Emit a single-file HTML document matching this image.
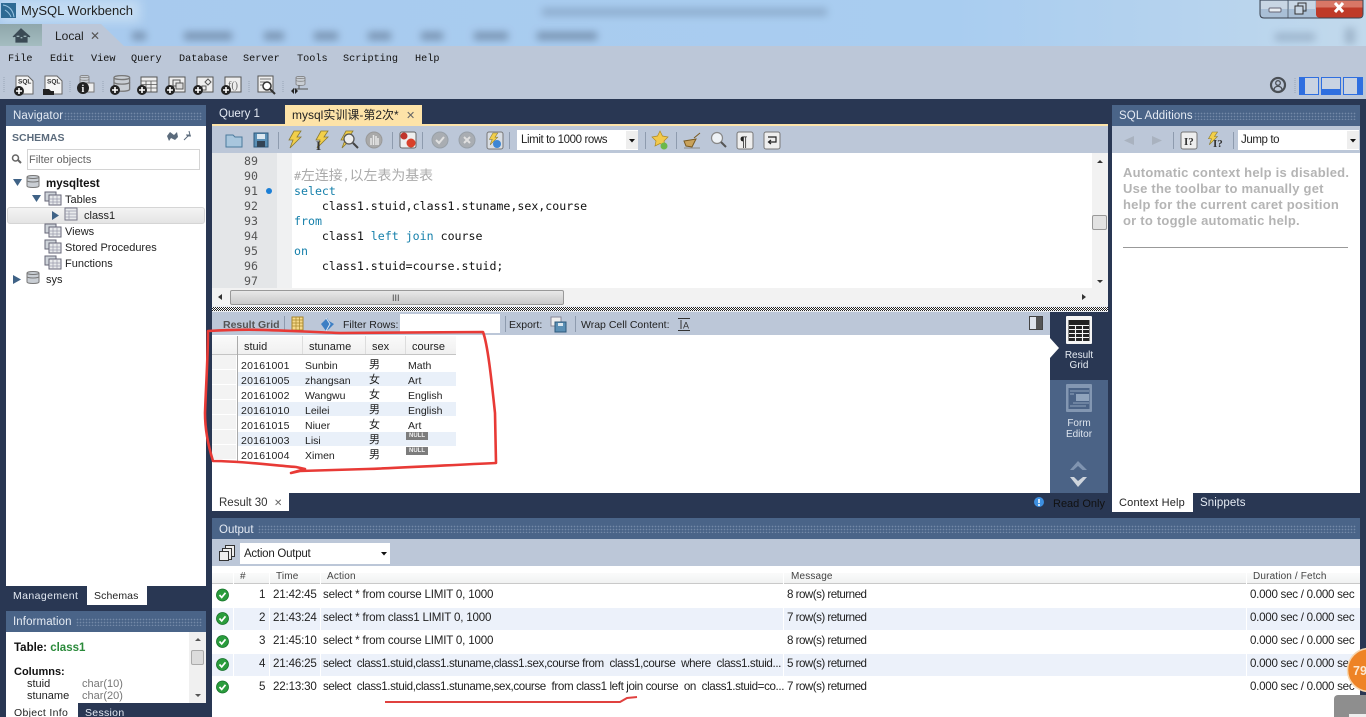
<!DOCTYPE html>
<html><head><meta charset="utf-8"><title>MySQL Workbench</title>
<style>
html,body{margin:0;padding:0;width:1366px;height:717px;overflow:hidden;background:#293753}
body{position:relative;font-family:"Liberation Sans","Noto Sans CJK SC",sans-serif;font-size:11.5px;color:#222}
.b,.t{position:absolute}
.t{white-space:pre;line-height:14px}
.m{font-family:"Liberation Mono",monospace;font-size:10.2px;color:#111}
.c{font-family:"DejaVu Sans Mono","Noto Sans CJK SC",monospace;font-size:11.6px;color:#111;line-height:15px}
.k{color:#1680ab}.n{color:#555;text-align:right;width:30px;left:228px}
.h{color:#e4eaf3;font-size:11.5px;letter-spacing:.1px}
.hd{background:#4a6488}
.dots{background-image:radial-gradient(circle,#7489a8 .7px,transparent .9px);background-size:3px 3px}
.g{font-size:10.5px;color:#222}
.id{letter-spacing:.25px}
.x{font-size:11px;left:369px}
.o{font-size:11.6px;letter-spacing:-.18px;color:#222}
.a{letter-spacing:-.38px}.ms{letter-spacing:-.52px}.d{letter-spacing:-.28px}
.ohd{font-size:10px;color:#444;letter-spacing:.15px}
.tr{font-size:11px;color:#222}
.blur{position:absolute;background:#51657f;filter:blur(4px);opacity:.55;height:8px}
.null{position:absolute;left:406px;width:22px;height:8px;background:#7c7c7c;color:#eee;font:bold 6px/8px "Liberation Sans",sans-serif;text-align:center}
svg{position:absolute;left:0;top:0}
</style></head><body>

<!-- title bar -->
<div class="b" style="left:0;top:0;width:1366px;height:46px;background:linear-gradient(90deg,#a8caee,#a9cdf0 70%,#b4d2ee 85%,#c2d9ec)"></div>
<div class="b" style="left:0;top:0;width:140px;height:22px;background:#c4dcf3;filter:blur(5px)"></div>
<div class="blur" style="left:542px;top:8px;width:285px;height:8px;opacity:.3"></div>
<div class="blur" style="left:1275px;top:33px;width:40px;opacity:.3"></div>
<div class="blur" style="left:1345px;top:28px;width:10px;height:16px;opacity:.3"></div>
<div class="blur" style="left:132px;top:32px;width:14px"></div>
<div class="blur" style="left:184px;top:32px;width:48px"></div>
<div class="blur" style="left:264px;top:32px;width:20px"></div>
<div class="blur" style="left:314px;top:32px;width:24px"></div>
<div class="blur" style="left:368px;top:32px;width:23px"></div>
<div class="blur" style="left:421px;top:32px;width:22px"></div>
<div class="blur" style="left:474px;top:32px;width:34px"></div>
<div class="blur" style="left:537px;top:32px;width:60px"></div>
<div class="t" style="left:21px;top:3px;font-size:13px;color:#222;line-height:15px">MySQL Workbench</div>

<!-- tabs home/local -->
<div class="b" style="left:0;top:24px;width:42px;height:22px;background:linear-gradient(#8fa6ab,#a4bcc0)"></div>
<div class="b" style="left:42px;top:24px;width:82px;height:22px;background:#bcc7d8;clip-path:polygon(0 0,72% 0,100% 100%,0 100%)"></div>
<div class="t" style="left:55px;top:29px;font-size:12px;color:#222">Local</div>
<div class="t" style="left:90px;top:29px;font-size:12px;color:#555">✕</div>

<!-- menu & toolbar -->
<div class="b" style="left:0;top:46px;width:1366px;height:53px;background:#bcc7d8"></div>
<div class="t m" style="left:8px;top:53px">File</div>
<div class="t m" style="left:50px;top:53px">Edit</div>
<div class="t m" style="left:91px;top:53px">View</div>
<div class="t m" style="left:131px;top:53px">Query</div>
<div class="t m" style="left:179px;top:53px">Database</div>
<div class="t m" style="left:243px;top:53px">Server</div>
<div class="t m" style="left:297px;top:53px">Tools</div>
<div class="t m" style="left:343px;top:53px">Scripting</div>
<div class="t m" style="left:415px;top:53px">Help</div>

<!-- left navigator -->
<div class="b hd" style="left:6px;top:105px;width:200px;height:21px"></div>
<div class="b dots" style="left:64px;top:112px;width:138px;height:8px"></div>
<div class="t h" style="left:13px;top:109px">Navigator</div>
<div class="b" style="left:6px;top:126px;width:200px;height:460px;background:#fff"></div>
<div class="t" style="left:12px;top:131px;font-size:10.5px;font-weight:bold;color:#5b6b7c">SCHEMAS</div>
<div class="b" style="left:27px;top:149px;width:171px;height:19px;border:1px solid #d4d4d4;background:#fff"></div>
<div class="t" style="left:29px;top:153px;font-size:11px;color:#666">Filter objects</div>
<div class="b" style="left:7px;top:207px;width:196px;height:15px;background:linear-gradient(#f4f4f4,#e4e4e4);border:1px solid #d5d5d5;border-radius:3px"></div>
<div class="t tr" style="left:46px;top:177px;font-weight:bold;font-size:11.5px;color:#111">mysqltest</div>
<div class="t tr" style="left:65px;top:193px">Tables</div>
<div class="t tr" style="left:84px;top:209px">class1</div>
<div class="t tr" style="left:65px;top:225px">Views</div>
<div class="t tr" style="left:65px;top:241px">Stored Procedures</div>
<div class="t tr" style="left:65px;top:257px">Functions</div>
<div class="t tr" style="left:46px;top:273px">sys</div>

<div class="t h" style="left:13px;top:589px;font-size:10.5px;letter-spacing:.4px">Management</div>
<div class="b" style="left:87px;top:586px;width:60px;height:19px;background:#fff"></div>
<div class="t" style="left:94px;top:589px;font-size:10.5px;letter-spacing:.1px">Schemas</div>

<div class="b hd" style="left:6px;top:611px;width:200px;height:21px"></div>
<div class="b dots" style="left:76px;top:618px;width:126px;height:8px"></div>
<div class="t h" style="left:13px;top:615px">Information</div>
<div class="b" style="left:6px;top:632px;width:200px;height:71px;background:#fff"></div>
<div class="b" style="left:189px;top:632px;width:17px;height:71px;background:#f0f0f0"></div>
<div class="b" style="left:191px;top:650px;width:13px;height:15px;background:#dcdcdc;border:1px solid #aaa;border-radius:2px;box-sizing:border-box"></div>
<div class="t" style="left:14px;top:641px;font-size:11.5px;font-weight:bold;color:#111">Table: <span style="color:#2a8a3a">class1</span></div>
<div class="t" style="left:14px;top:665px;font-size:11px;font-weight:bold;color:#111">Columns:</div>
<div class="t g" style="left:27px;top:677px;font-size:11px">stuid</div><div class="t g" style="left:82px;top:677px;color:#777;font-size:11px">char(10)</div>
<div class="t g" style="left:27px;top:689px;font-size:11px">stuname</div><div class="t g" style="left:82px;top:689px;color:#777;font-size:11px">char(20)</div>
<div class="b" style="left:6px;top:703px;width:72px;height:14px;background:#fff"></div>
<div class="t" style="left:14px;top:706px;font-size:10.5px;letter-spacing:.3px">Object Info</div>
<div class="t h" style="left:85px;top:706px;font-size:10.5px;letter-spacing:.3px">Session</div>

<!-- query tabs -->
<div class="t h" style="left:219px;top:107px;font-size:11.5px;letter-spacing:0">Query 1</div>
<div class="b" style="left:285px;top:105px;width:137px;height:19px;background:#fde3a8"></div>
<div class="t" style="left:292px;top:108px;font-size:12px;color:#222">mysql实训课-第2次*</div>
<div class="t" style="left:406px;top:109px;font-size:11px;color:#666">✕</div>
<div class="b" style="left:212px;top:124px;width:896px;height:2px;background:#fde3a8"></div>
<div class="b" style="left:212px;top:126px;width:896px;height:27px;background:#bcc7d8"></div>
<div class="b" style="left:517px;top:130px;width:121px;height:20px;background:#fff"></div>
<div class="b" style="left:626px;top:131px;width:12px;height:18px;background:#eee"></div>
<div class="t" style="left:521px;top:133px;font-size:11.5px;color:#222;letter-spacing:-.4px">Limit to 1000 rows</div>

<!-- editor -->
<div class="b" style="left:212px;top:153px;width:896px;height:135px;background:#fff"></div>
<div class="b" style="left:212px;top:153px;width:65px;height:135px;background:#e4e6e8"></div>
<div class="b" style="left:277px;top:153px;width:15px;height:135px;background:#f0f1f2"></div>
<div class="b" style="left:1092px;top:153px;width:16px;height:135px;background:#f2f2f2"></div>
<div class="b" style="left:1092px;top:215px;width:15px;height:15px;background:#e2e2e2;border:1px solid #999;border-radius:2px;box-sizing:border-box"></div>
<div class="t c n" style="top:154px">89</div>
<div class="t c n" style="top:169px">90</div>
<div class="t c n" style="top:184px">91</div>
<div class="t c n" style="top:199px">92</div>
<div class="t c n" style="top:214px">93</div>
<div class="t c n" style="top:229px">94</div>
<div class="t c n" style="top:244px">95</div>
<div class="t c n" style="top:259px">96</div>
<div class="t c n" style="top:274px">97</div>
<div class="b" style="left:266px;top:188px;width:6px;height:6px;border-radius:50%;background:#1b7fd6"></div>
<div class="t c" style="left:294px;top:169px;color:#aaa">#<span style="font-size:13.9px;line-height:15px">左连接</span>,<span style="font-size:13.9px;line-height:15px">以左表为基表</span></div>
<div class="t c k" style="left:294px;top:184px">select</div>
<div class="t c" style="left:294px;top:199px">    class1.stuid,class1.stuname,sex,course</div>
<div class="t c k" style="left:294px;top:214px">from</div>
<div class="t c" style="left:294px;top:229px">    class1 <span class="k">left</span> <span class="k">join</span> course</div>
<div class="t c k" style="left:294px;top:244px">on</div>
<div class="t c" style="left:294px;top:259px">    class1.stuid=course.stuid;</div>

<!-- hscroll -->
<div class="b" style="left:212px;top:288px;width:896px;height:18px;background:#f2f2f2"></div>
<div class="b" style="left:230px;top:290px;width:334px;height:15px;background:linear-gradient(#e8e8e8,#c9c9c9);border:1px solid #999;border-radius:2px;box-sizing:border-box"></div>
<div class="t" style="left:392px;top:291px;font-size:9px;color:#444">III</div>
<div class="b" style="left:212px;top:306px;width:896px;height:6px;background:#e8ebf0"></div>
<div class="b" style="left:212px;top:307px;width:896px;height:4px;background:conic-gradient(#222 25%,#fff 0 50%,#222 0 75%,#fff 0);background-size:2px 2px"></div>

<!-- result toolbar -->
<div class="b" style="left:212px;top:312px;width:838px;height:23px;background:#bcc7d8"></div>
<div class="t" style="left:223px;top:318px;font-size:10.5px;font-weight:bold;color:#555">Result Grid</div>
<div class="t" style="left:343px;top:318px;font-size:10.5px;color:#222">Filter Rows:</div>
<div class="b" style="left:400px;top:314px;width:100px;height:19px;background:#fff"></div>
<div class="t" style="left:509px;top:318px;font-size:10.5px;color:#222">Export:</div>
<div class="t" style="left:581px;top:318px;font-size:10.5px;color:#222">Wrap Cell Content:</div>

<!-- result grid -->
<div class="b" style="left:212px;top:335px;width:838px;height:158px;background:#fff"></div>
<div class="b" style="left:212px;top:336px;width:244px;height:19px;background:linear-gradient(#fafafa,#f0f0f0);border-bottom:1px solid #c4c4c4;box-sizing:border-box"></div>
<div class="b" style="left:212px;top:355px;width:24px;height:106px;background:repeating-linear-gradient(#f3f3f3 0 14px,#fff 14px 15px)"></div>
<div class="b" style="left:237px;top:336px;width:1px;height:126px;background:#aaa"></div>
<div class="b" style="left:302px;top:336px;width:1px;height:18px;background:#ddd"></div>
<div class="b" style="left:365px;top:336px;width:1px;height:18px;background:#ddd"></div>
<div class="b" style="left:405px;top:336px;width:1px;height:18px;background:#ddd"></div>
<div class="b" style="left:238px;top:372px;width:218px;height:14px;background:#e9f0f9"></div>
<div class="b" style="left:238px;top:402px;width:218px;height:14px;background:#e9f0f9"></div>
<div class="b" style="left:238px;top:432px;width:218px;height:14px;background:#e9f0f9"></div>
<div class="t g" style="left:244px;top:340px;font-size:11px">stuid</div>
<div class="t g" style="left:309px;top:340px;font-size:11px">stuname</div>
<div class="t g" style="left:372px;top:340px;font-size:11px">sex</div>
<div class="t g" style="left:412px;top:340px;font-size:11px">course</div>

<div class="t g id" style="left:241px;top:359px">20161001</div><div class="t g" style="left:305px;top:359px">Sunbin</div><div class="t g x" style="top:358px">男</div><div class="t g" style="left:408px;top:359px">Math</div>
<div class="t g id" style="left:241px;top:374px">20161005</div><div class="t g" style="left:305px;top:374px">zhangsan</div><div class="t g x" style="top:373px">女</div><div class="t g" style="left:408px;top:374px">Art</div>
<div class="t g id" style="left:241px;top:389px">20161002</div><div class="t g" style="left:305px;top:389px">Wangwu</div><div class="t g x" style="top:388px">女</div><div class="t g" style="left:408px;top:389px">English</div>
<div class="t g id" style="left:241px;top:404px">20161010</div><div class="t g" style="left:305px;top:404px">Leilei</div><div class="t g x" style="top:403px">男</div><div class="t g" style="left:408px;top:404px">English</div>
<div class="t g id" style="left:241px;top:419px">20161015</div><div class="t g" style="left:305px;top:419px">Niuer</div><div class="t g x" style="top:418px">女</div><div class="t g" style="left:408px;top:419px">Art</div>
<div class="t g id" style="left:241px;top:434px">20161003</div><div class="t g" style="left:305px;top:434px">Lisi</div><div class="t g x" style="top:433px">男</div><div class="null" style="top:432px">NULL</div>
<div class="t g id" style="left:241px;top:449px">20161004</div><div class="t g" style="left:305px;top:449px">Ximen</div><div class="t g x" style="top:448px">男</div><div class="null" style="top:447px">NULL</div>

<!-- side rail -->
<div class="b" style="left:1050px;top:380px;width:58px;height:113px;background:#4b6386"></div>
<div class="t" style="left:1050px;top:351px;width:58px;text-align:center;font-size:10px;line-height:10px;color:#e8edf4;white-space:normal">Result<br>Grid</div>
<div class="t" style="left:1050px;top:418px;width:58px;text-align:center;font-size:10px;line-height:11px;color:#dfe6ef;white-space:normal">Form<br>Editor</div>
<div class="b" style="left:1050px;top:338px;width:9px;height:20px;background:#fff;clip-path:polygon(0 0,100% 50%,0 100%)"></div>

<!-- result tab row -->
<div class="b" style="left:212px;top:493px;width:77px;height:18px;background:#fff"></div>
<div class="t" style="left:219px;top:496px;font-size:11.5px;color:#333">Result 30</div>
<div class="t" style="left:274px;top:497px;font-size:10px;color:#666">✕</div>
<div class="t" style="left:1053px;top:497px;font-size:11px;color:#111">Read Only</div>

<!-- SQL additions -->
<div class="b hd" style="left:1112px;top:105px;width:248px;height:21px"></div>
<div class="b dots" style="left:1194px;top:112px;width:162px;height:8px"></div>
<div class="t h" style="left:1119px;top:109px">SQL Additions</div>
<div class="b" style="left:1112px;top:126px;width:248px;height:27px;background:#bcc7d8"></div>
<div class="b" style="left:1238px;top:130px;width:121px;height:20px;background:#fff"></div>
<div class="b" style="left:1347px;top:131px;width:12px;height:18px;background:#eee"></div>
<div class="t" style="left:1241px;top:133px;font-size:11.5px;color:#222;letter-spacing:-.4px">Jump to</div>
<div class="b" style="left:1112px;top:153px;width:248px;height:340px;background:#fff"></div>
<div class="t" style="left:1123px;top:165px;font-size:13px;font-weight:bold;color:#b4b4b4;line-height:16px;letter-spacing:.23px">Automatic context help is disabled.
Use the toolbar to manually get
help for the current caret position
or to toggle automatic help.</div>
<div class="b" style="left:1123px;top:247px;width:225px;height:1px;background:#999"></div>
<div class="b" style="left:1112px;top:493px;width:81px;height:19px;background:#fff"></div>
<div class="t" style="left:1119px;top:496px;font-size:11px;color:#222;letter-spacing:.2px">Context Help</div>
<div class="t h" style="left:1200px;top:496px;letter-spacing:.1px">Snippets</div>

<!-- output -->
<div class="b hd" style="left:212px;top:518px;width:1148px;height:21px"></div>
<div class="b dots" style="left:258px;top:525px;width:1098px;height:8px"></div>
<div class="t h" style="left:219px;top:523px;letter-spacing:0">Output</div>
<div class="b" style="left:212px;top:539px;width:1148px;height:27px;background:#bcc7d8"></div>
<div class="b" style="left:240px;top:543px;width:150px;height:21px;background:#fff"></div>
<div class="t" style="left:244px;top:547px;font-size:11.5px;color:#222;letter-spacing:-.25px">Action Output</div>
<div class="b" style="left:212px;top:566px;width:1148px;height:151px;background:#fff"></div>
<div class="b" style="left:212px;top:573px;width:1148px;height:10px;background:linear-gradient(#fbfbfb,#f1f2f2);border-bottom:1px solid #c9c9c9"></div>
<div class="b" style="left:212px;top:608px;width:1148px;height:22px;background:#ecf1fa"></div>
<div class="b" style="left:212px;top:654px;width:1148px;height:22px;background:#ecf1fa"></div>
<div class="b" style="left:233px;top:566px;width:1px;height:120px;background:#fff"></div>
<div class="b" style="left:269px;top:566px;width:1px;height:110px;background:#fff"></div>
<div class="b" style="left:320px;top:566px;width:1px;height:110px;background:#fff"></div>
<div class="b" style="left:783px;top:566px;width:1px;height:110px;background:#fff"></div>
<div class="b" style="left:1246px;top:566px;width:1px;height:110px;background:#fff"></div>
<div class="t ohd" style="left:240px;top:570px">#</div>
<div class="t ohd" style="left:276px;top:570px">Time</div>
<div class="t ohd" style="left:327px;top:570px">Action</div>
<div class="t ohd" style="left:791px;top:570px">Message</div>
<div class="t ohd" style="left:1253px;top:570px">Duration / Fetch</div>

<div class="t o" style="left:259px;top:588px">1</div><div class="t o" style="left:273px;top:588px">21:42:45</div><div class="t o a" style="left:323px;top:588px;letter-spacing:-.2px">select * from course LIMIT 0, 1000</div><div class="t o ms" style="left:787px;top:588px">8 row(s) returned</div><div class="t o d" style="left:1250px;top:588px">0.000 sec / 0.000 sec</div>
<div class="t o" style="left:259px;top:611px">2</div><div class="t o" style="left:273px;top:611px">21:43:24</div><div class="t o a" style="left:323px;top:611px;letter-spacing:-.2px">select * from class1 LIMIT 0, 1000</div><div class="t o ms" style="left:787px;top:611px">7 row(s) returned</div><div class="t o d" style="left:1250px;top:611px">0.000 sec / 0.000 sec</div>
<div class="t o" style="left:259px;top:634px">3</div><div class="t o" style="left:273px;top:634px">21:45:10</div><div class="t o a" style="left:323px;top:634px;letter-spacing:-.2px">select * from course LIMIT 0, 1000</div><div class="t o ms" style="left:787px;top:634px">8 row(s) returned</div><div class="t o d" style="left:1250px;top:634px">0.000 sec / 0.000 sec</div>
<div class="t o" style="left:259px;top:657px">4</div><div class="t o" style="left:273px;top:657px">21:46:25</div><div class="t o a" style="left:323px;top:657px">select  class1.stuid,class1.stuname,class1.sex,course from  class1,course  where  class1.stuid...</div><div class="t o ms" style="left:787px;top:657px">5 row(s) returned</div><div class="t o d" style="left:1250px;top:657px">0.000 sec / 0.000 sec</div>
<div class="t o" style="left:259px;top:680px">5</div><div class="t o" style="left:273px;top:680px">22:13:30</div><div class="t o a" style="left:323px;top:680px">select  class1.stuid,class1.stuname,sex,course  from class1 left join course  on  class1.stuid=co...</div><div class="t o ms" style="left:787px;top:680px">7 row(s) returned</div><div class="t o d" style="left:1250px;top:680px">0.000 sec / 0.000 sec</div>

<!-- icons & annotations -->
<svg width="1366" height="717" viewBox="0 0 1366 717" xmlns="http://www.w3.org/2000/svg">
<defs>
<g id="plus"><circle r="5" fill="#222"/><path d="M-3 0H3M0-3V3" stroke="#fff" stroke-width="1.6"/></g>
<g id="cyl"><path d="M0 2C0 0 12 0 12 2V11C12 13 0 13 0 11Z" fill="#c9ced4" stroke="#777"/><path d="M0 2C0 4 12 4 12 2M0 5.5C0 7.5 12 7.5 12 5.5" fill="none" stroke="#777"/></g>
<g id="grp"><rect x="0" y="0" width="11" height="9" fill="#cfd4da" stroke="#667"/><rect x="4" y="3" width="12" height="10" fill="#e8eaec" stroke="#667"/><path d="M8 3V13M12 3V13M4 7H16M4 10H16" stroke="#99a" stroke-width=".7"/></g>
<g id="ok"><circle r="6" fill="#2a9c3c"/><circle r="6" fill="none" stroke="#15702a" stroke-width=".8"/><path d="M-3 0L-.8 2.4 3 -2.2" fill="none" stroke="#fff" stroke-width="1.7"/></g>
<path id="bolt" d="M7 0L14 0 10 6 14 6 3 17 6 9 2 9Z" fill="#f2cf4a" stroke="#8a7a30" stroke-width=".8"/>
</defs>

<!-- app icon -->
<rect x="1" y="3" width="15" height="15" fill="#2e6a94"/><path d="M3 5C9 6 13 10 14 17M5 10C8 12 10 14 11 17" stroke="#9cc6e4" fill="none"/>
<!-- home -->
<path d="M13 37L21 29 30 37M16 35V42H27V35H23V39H20V35Z" fill="#3b4a55" stroke="#3b4a55" stroke-width="1.2"/>

<!-- window buttons -->
<g>
<path d="M1260 0V14Q1260 18 1264 18H1359Q1363 18 1363 14V0Z" fill="#a9bfd6" stroke="#39424f"/>
<rect x="1261" y="1" width="27" height="8" fill="#c8d6e4"/><rect x="1289" y="1" width="26" height="8" fill="#c8d6e4"/>
<path d="M1288 0V18" stroke="#39424f" stroke-width=".7"/>
<rect x="1316" y="0.500" width="46.500" height="17" rx="3" fill="#bf3a28"/><rect x="1316" y="0.500" width="46.500" height="7" fill="#d97766"/>
<rect x="1269" y="8" width="12" height="4" rx="1" fill="#e8edf2" stroke="#667"/>
<rect x="1295" y="6" width="8" height="8" fill="#c8d6e4" stroke="#333"/><path d="M1298 6V3H1306V11H1303" fill="none" stroke="#333"/>
<path d="M1335 3L1343 12M1343 3L1335 12" stroke="#fff" stroke-width="3"/>
</g>

<!-- main toolbar -->
<g>
<path d="M4 77V93M70 81V92M103 81V92M249 81V92M283 81V92" stroke="#98a4b6" stroke-dasharray="1 1"/>
<g transform="translate(16,76)"><path d="M0 0H12L17 5V18H0Z" fill="#f5f5f5" stroke="#666"/><text x="2" y="7.500" font-size="6.500" font-weight="bold" font-family="Liberation Sans" fill="#333">SQL</text><use href="#plus" x="3" y="15"/></g>
<g transform="translate(45,76)"><path d="M0 0H12L17 5V18H0Z" fill="#f5f5f5" stroke="#666"/><text x="2" y="7.500" font-size="6.500" font-weight="bold" font-family="Liberation Sans" fill="#333">SQL</text><path d="M-2 13H4L6 15H9V19H-2Z" fill="#222"/></g>
<g transform="translate(77,75)"><use href="#cyl" transform="translate(3,0) scale(.75)"/><rect x="8" y="8" width="9" height="9" fill="#eee" stroke="#777"/><circle cx="6" cy="13" r="6" fill="#222"/><text x="4.500" y="17" font-size="10" font-weight="bold" font-family="Liberation Serif" fill="#fff">i</text></g>
<g transform="translate(114,75)"><use href="#cyl" transform="scale(1.3)"/><use href="#plus" x="1" y="15"/></g>
<g transform="translate(141,77)"><rect width="16" height="15" fill="#eee" stroke="#555"/><path d="M0 4H16M0 7.500H16M0 11H16M5 4V15M10 4V15" stroke="#555" stroke-width=".8"/><use href="#plus" x="1" y="13"/></g>
<g transform="translate(169,77)"><rect width="16" height="15" fill="#eee" stroke="#555"/><rect x="4" y="3" width="7" height="6" fill="none" stroke="#555"/><rect x="7" y="6" width="7" height="6" fill="#ddd" stroke="#555"/><use href="#plus" x="1" y="13"/></g>
<g transform="translate(197,77)"><rect width="16" height="15" fill="#eee" stroke="#555"/><path d="M11 2L14 5 11 8 8 5Z" fill="none" stroke="#555"/><rect x="5" y="9" width="4" height="4" fill="none" stroke="#555"/><use href="#plus" x="1" y="13"/></g>
<g transform="translate(225,77)"><rect width="16" height="15" fill="#eee" stroke="#555"/><text x="3" y="11.500" font-size="10" font-family="Liberation Serif" fill="#666">f()</text><use href="#plus" x="1" y="13"/></g>
<g transform="translate(258,76)"><rect width="15" height="16" fill="#eee" stroke="#555"/><path d="M2 3H13M2 6H7M2 9H5" stroke="#777"/><circle cx="9" cy="10" r="4" fill="#fff" stroke="#333" stroke-width="1.5"/><path d="M12 13L17 18" stroke="#333" stroke-width="2"/></g>
<g transform="translate(291,76)"><use href="#cyl" transform="translate(5,0) scale(.75)"/><path d="M2 13H17M8 9V13" stroke="#555"/><path d="M0 15L3 12 3 18ZM7 15L4 12 4 18Z" fill="#222"/></g>
</g>
<!-- gear / layout -->
<circle cx="1278" cy="85" r="7" fill="none" stroke="#4a4f55" stroke-width="2.200"/><circle cx="1278" cy="83" r="2.300" fill="none" stroke="#4a4f55" stroke-width="1.300"/><path d="M1274 90C1274 85 1282 85 1282 90" fill="none" stroke="#4a4f55" stroke-width="1.300"/>
<path d="M1295 78V94" stroke="#98a4b6" stroke-dasharray="1 1"/>
<g fill="#c9d3e2" stroke="#2f6fe0" stroke-width="1">
<rect x="1299.500" y="77.500" width="19" height="17"/><rect x="1321.500" y="77.500" width="19" height="17"/><rect x="1343.500" y="77.500" width="19" height="17"/></g>
<rect x="1299" y="77" width="6" height="18" fill="#2f6fe0"/><rect x="1321" y="89" width="20" height="6" fill="#2f6fe0"/><rect x="1357" y="77" width="6" height="18" fill="#2f6fe0"/>

<!-- schemas icons -->
<path d="M167 136L170 132 174 135 177 132 178 137 175 140 171 138 169 141Z" fill="#5b6b7c"/>
<path d="M184 140L188 136M189 131L190 135 186 135M191 136H187" stroke="#5b6b7c" fill="none"/>
<circle cx="15.500" cy="158" r="3" fill="none" stroke="#666" stroke-width="1.500"/><path d="M18 160L21 163" stroke="#666" stroke-width="2"/>
<!-- tree -->
<path d="M13 179H22L17.500 186Z" fill="#3f6286"/><path d="M32 195H41L36.500 202Z" fill="#3f6286"/><path d="M52 211V220L59 215.500Z" fill="#3f6286"/><path d="M13 275V284L21 279.500Z" fill="#3f6286"/>
<use href="#cyl" x="27" y="175"/><use href="#cyl" x="27" y="271"/>
<use href="#grp" x="45" y="192"/><use href="#grp" x="45" y="224"/><use href="#grp" x="45" y="240"/><use href="#grp" x="45" y="256"/>
<g transform="translate(65,208)"><rect width="12" height="12" fill="#e8eaec" stroke="#778"/><path d="M0 3H12M0 6H12M0 9H12M4 3V12" stroke="#99a" stroke-width=".7"/></g>

<!-- query toolbar -->
<path d="M422.500 132V149M509.500 132V149M278.500 132V149M392.500 132V149M645.500 132V149M676.500 132V149" stroke="#8e9bae"/>
<path d="M226 135H233L235 137H242V147H226Z" fill="#a8c6dd" stroke="#4a7a9c"/>
<g transform="translate(254,133)"><rect width="14" height="14" fill="#5a8fb5" stroke="#2e5a7c"/><rect x="3" y="1" width="8" height="5" fill="#dce8f0"/><rect x="3" y="8" width="8" height="6" fill="#345"/></g>
<use href="#bolt" x="287" y="131"/><use href="#bolt" x="314" y="131"/>
<text x="316" y="150" font-size="13" font-weight="bold" font-family="Liberation Serif" fill="#333">I</text>
<use href="#bolt" x="339" y="131"/><circle cx="349" cy="139" r="5" fill="#eee" stroke="#555" stroke-width="1.300"/><path d="M353 143L358 148" stroke="#444" stroke-width="2"/>
<circle cx="374" cy="140" r="8" fill="#a9a9a9" stroke="#999"/><path d="M371 145V138M373.500 145V135M376 145V136M378 145V138" stroke="#e8e8e8" stroke-width="1.500"/>
<rect x="400" y="132" width="16" height="16" rx="2" fill="#eee" stroke="#666"/><circle cx="404" cy="136" r="3.500" fill="#c0342c"/><circle cx="411" cy="143" r="4.500" fill="#d9402a"/>
<circle cx="440" cy="140" r="8" fill="#a9adb2" stroke="#98a0a8"/><path d="M436 140L439 143 444 137" fill="none" stroke="#e0e0e0" stroke-width="2"/>
<circle cx="467" cy="140" r="8" fill="#a9adb2" stroke="#98a0a8"/><path d="M464 137L470 143M470 137L464 143" stroke="#e0e0e0" stroke-width="2"/>
<rect x="487" y="132" width="16" height="17" rx="2" fill="#d8dde3" stroke="#777"/><use href="#bolt" transform="translate(488,133) scale(.7)"/><circle cx="497" cy="144" r="4" fill="#3d86d4"/>
<path d="M629 139H635L632 142.500Z" fill="#111"/>
<path d="M660 131L662.500 136 668 137 664 141 665 146 660 143.500 655 146 656 141 652 137 657.500 136Z" fill="#f2c94c" stroke="#b08a20" stroke-width=".7"/><circle cx="664" cy="146" r="3.500" fill="#6cb84a"/>
<path d="M684 141L696 139 692 147 686 146ZM694 138L700 133" fill="#c9a25a" stroke="#7a5a20"/><path d="M684 148H700" stroke="#888"/>
<circle cx="717" cy="138" r="5.500" fill="#eef2f6" stroke="#888" stroke-width="1.200"/><path d="M721 142L726 147" stroke="#555" stroke-width="2"/>
<rect x="737" y="132" width="16" height="17" rx="2" fill="#eee" stroke="#777"/><text x="740" y="146" font-size="14" font-family="Liberation Sans" fill="#222">¶</text>
<rect x="764" y="132" width="16" height="17" rx="2" fill="#eee" stroke="#777"/><path d="M768 137H776V142H769M771 140L768.500 142 771 144" fill="none" stroke="#222" stroke-width="1.200"/>
<!-- sql additions toolbar -->
<path d="M1134 136V145L1124 140.500ZM1152 136V145L1162 140.500Z" fill="#a9b2bf"/>
<path d="M1173.500 132V149M1233.500 132V149" stroke="#8e9bae"/>
<rect x="1181" y="132" width="16" height="17" rx="2" fill="#eee" stroke="#777"/><text x="1184" y="145" font-size="11" font-weight="bold" font-family="Liberation Serif" fill="#333">I?</text>
<use href="#bolt" transform="translate(1207,132) scale(.75)"/><text x="1213" y="147" font-size="11" font-weight="bold" font-family="Liberation Serif" fill="#333">I?</text>
<path d="M1350 139H1356L1353 142.500Z" fill="#111"/>

<!-- scrollbar arrows -->
<path d="M1097 163L1100 160 1103 163ZM1097 280L1100 283 1103 280ZM222 294V300L218 297ZM1082 294V300L1086 297Z" fill="#333"/>
<path d="M195 641L198 638 201 641ZM195 694L198 697 201 694Z" fill="#555"/>

<!-- result toolbar icons -->
<path d="M284.500 316V332M505.500 316V332M575.500 316V332" stroke="#8e9bae"/>
<g transform="translate(292,317)"><rect width="11" height="13" fill="#f5d98a" stroke="#a8862c"/><path d="M0 3H11M0 6H11M0 9H11M4 0V13M7.500 0V13" stroke="#a8862c" stroke-width=".7"/></g>
<path d="M321 324L327 318 329 321 334 324 329 329 326 331Z" fill="#3d7fc4"/><path d="M326 318L330 324 326 331" fill="none" stroke="#dbe6f2"/>
<g transform="translate(551,317)"><rect width="10" height="9" fill="#eee" stroke="#889"/><rect x="4" y="5" width="11" height="10" fill="#5a8fb5" stroke="#2e5a7c"/><rect x="7" y="6" width="5" height="3" fill="#dce8f0"/></g>
<g transform="translate(678,318)"><path d="M0 .500H12M0 12.500H12" stroke="#333"/><text x="5" y="10.500" font-size="9" font-family="Liberation Sans" fill="#333">A</text><path d="M3 2V11" stroke="#333"/></g>
<rect x="1029.500" y="316.500" width="13" height="13" fill="#dfe4ec" stroke="#444"/><rect x="1036" y="317" width="6" height="12" fill="#555"/>

<!-- rail icons -->
<g transform="translate(1066,316)"><rect width="26" height="28" rx="1" fill="#f5f5f5"/><rect x="2.500" y="4" width="21" height="21" fill="#222"/><path d="M3 9.500H23M3 13.500H23M3 17.500H23M3 21.500H23M9.500 9V25M16.500 9V25" stroke="#f5f5f5" stroke-width="1.100"/></g>
<g transform="translate(1066,384)"><rect width="26" height="28" rx="1" fill="#8397b2"/><rect x="2.500" y="4" width="21" height="21" fill="#4b6386"/><rect x="10" y="10" width="13" height="7" fill="#8fa3bc"/><path d="M4 7H23M4 10H8M7 19H23M4 22H20" stroke="#8fa3bc"/></g>
<path d="M1070 470L1078 461 1087 470 1082.500 470 1078 466 1073.500 470Z" fill="#8094b0"/>
<path d="M1070 477L1074 477 1078 481 1083 477 1087 477 1078 487Z" fill="#cfd5dd"/>
<!-- read only -->
<circle cx="1039" cy="502" r="5" fill="#3d8fe0"/><path d="M1039 499V503M1039 504V506" stroke="#fff" stroke-width="1.500"/>

<!-- output icons -->
<g fill="#eee" stroke="#333"><rect x="225.500" y="545.500" width="9" height="11"/><rect x="222.500" y="548.500" width="9" height="11"/><rect x="219.500" y="551.500" width="9" height="9"/></g>
<path d="M381 552H387L384 555.500Z" fill="#111"/>
<use href="#ok" x="222.500" y="595"/><use href="#ok" x="222.500" y="618.500"/><use href="#ok" x="222.500" y="641.500"/><use href="#ok" x="222.500" y="664.500"/><use href="#ok" x="222.500" y="687"/>

<!-- red annotations -->
<path d="M208 331C260 328 280 331 340 333L483 332C488 345 492 385 495 413L496 463C450 465 420 467 367 469L300 471 291 473 305 469 296 467C270 465 240 461 213 461C208 445 205 430 205 413C206 385 208 355 208 331Z" fill="none" stroke="#e83a36" stroke-width="2.600" stroke-linejoin="round"/>
<path d="M385 702H620L627 698 637 697" fill="none" stroke="#e0413f" stroke-width="2"/>

<!-- floating badge -->
<rect x="1334" y="695" width="40" height="30" rx="4" fill="#8e8e8e"/><path d="M1349 714H1366V717H1349Z" fill="#eee"/>
<circle cx="1369" cy="670" r="21.500" fill="#ee8325" stroke="#f7d7b0" stroke-width="1.500"/>
<text x="1353" y="675" font-size="12.500" font-weight="bold" font-family="Liberation Sans" fill="#fde8d0">79</text>
</svg>
</body></html>
